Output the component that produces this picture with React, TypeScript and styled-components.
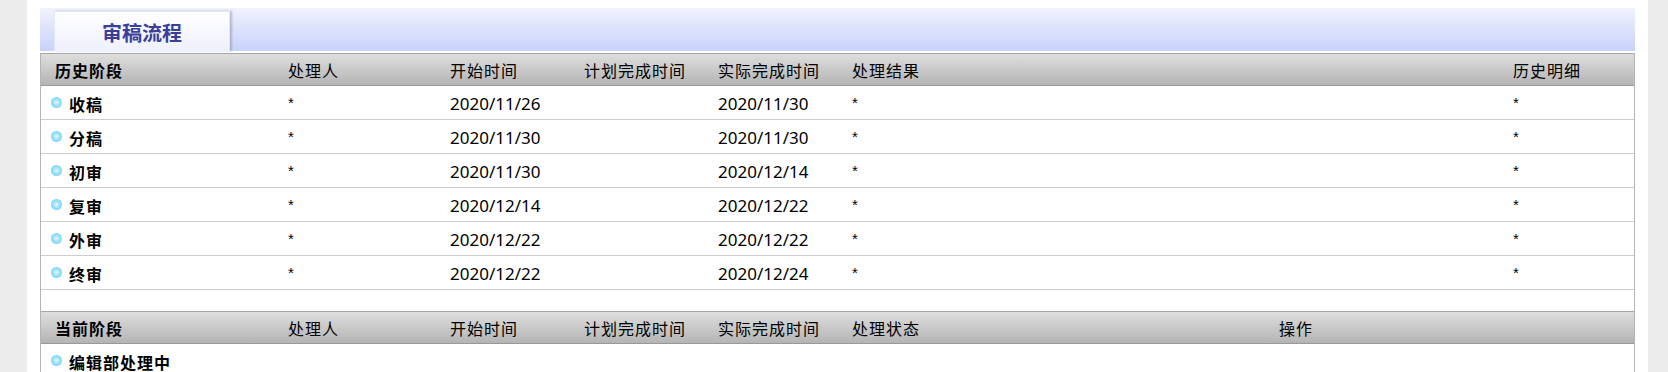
import React from 'react';
import { styled, createGlobalStyle } from 'styled-components';

const GlobalStyle = createGlobalStyle`
    html, body {
        margin: 0;
        padding: 0;
        background: #ececec;
        font-family: "Noto Sans", "Noto Sans CJK SC", sans-serif;
        color: #000;
        overflow: hidden;
    }
`;

interface HistoryRow {
    stage: string;
    handler: string;
    start: string;
    planned: string;
    actual: string;
    result: string;
    detail: string;
}

const historyRows: HistoryRow[] = [
    { stage: '收稿', handler: '*', start: '2020/11/26', planned: '', actual: '2020/11/30', result: '*', detail: '*' },
    { stage: '分稿', handler: '*', start: '2020/11/30', planned: '', actual: '2020/11/30', result: '*', detail: '*' },
    { stage: '初审', handler: '*', start: '2020/11/30', planned: '', actual: '2020/12/14', result: '*', detail: '*' },
    { stage: '复审', handler: '*', start: '2020/12/14', planned: '', actual: '2020/12/22', result: '*', detail: '*' },
    { stage: '外审', handler: '*', start: '2020/12/22', planned: '', actual: '2020/12/22', result: '*', detail: '*' },
    { stage: '终审', handler: '*', start: '2020/12/22', planned: '', actual: '2020/12/24', result: '*', detail: '*' },
];

const historyCols = '247px 162px 134px 134px 134px 661px 1fr';
const currentCols = '247px 162px 134px 134px 134px 427px 1fr';

// masked values are shown as a lone asterisk in a lighter face
const Value: React.FC<{ text: string }> = ({ text }) =>
    text === '*' ? <Star>*</Star> : <>{text}</>;

const App: React.FC = () => {
    return (
        <>
            <GlobalStyle />
            <Page>
                <TitleBar>
                    <Tab>审稿流程</Tab>
                </TitleBar>
                <Table>
                    <HeaderRow $cols={historyCols}>
                        <StageHead>历史阶段</StageHead>
                        <HeadCell>处理人</HeadCell>
                        <HeadCell>开始时间</HeadCell>
                        <HeadCell>计划完成时间</HeadCell>
                        <HeadCell>实际完成时间</HeadCell>
                        <HeadCell>处理结果</HeadCell>
                        <HeadCell>历史明细</HeadCell>
                    </HeaderRow>
                    {historyRows.map(row => (
                        <DataRow key={row.stage} $cols={historyCols}>
                            <StageCell>
                                <Bullet />
                                {row.stage}
                            </StageCell>
                            <Cell><Value text={row.handler} /></Cell>
                            <Cell>{row.start}</Cell>
                            <Cell>{row.planned}</Cell>
                            <Cell>{row.actual}</Cell>
                            <Cell><Value text={row.result} /></Cell>
                            <Cell><Value text={row.detail} /></Cell>
                        </DataRow>
                    ))}
                    <Spacer />
                    <HeaderRow $cols={currentCols}>
                        <StageHead>当前阶段</StageHead>
                        <HeadCell>处理人</HeadCell>
                        <HeadCell>开始时间</HeadCell>
                        <HeadCell>计划完成时间</HeadCell>
                        <HeadCell>实际完成时间</HeadCell>
                        <HeadCell>处理状态</HeadCell>
                        <HeadCell>操作</HeadCell>
                    </HeaderRow>
                    <DataRow $cols={currentCols}>
                        <StageCell>
                            <Bullet />
                            编辑部处理中
                        </StageCell>
                        <Cell />
                        <Cell />
                        <Cell />
                        <Cell />
                        <Cell />
                        <Cell />
                    </DataRow>
                </Table>
            </Page>
        </>
    );
};

const Page = styled.div`
    margin: 0 20px 0 27px;
    background: #fff;
    padding: 8px 13px 0 13px;
    height: 100vh;
    box-sizing: border-box;
    display: flex;
    flex-direction: column;
    overflow: hidden;
`;

const TitleBar = styled.div`
    height: 43px;
    flex-shrink: 0;
    background: linear-gradient(#f0f2fd, #c8d2fb);
    display: flex;
    align-items: flex-end;
    padding-left: 14px;
    margin-bottom: 2px;
`;

const Tab = styled.div`
    width: 176px;
    height: 40px;
    box-sizing: border-box;
    display: flex;
    align-items: center;
    justify-content: center;
    background: linear-gradient(#ffffff, #eef0fc);
    border: 1px solid #e4e7f6;
    border-bottom: none;
    box-shadow: 2px 0 2px rgba(90, 95, 130, 0.35);
    color: #3b3f9c;
    font-family: "Noto Sans CJK SC", sans-serif;
    font-size: 20px;
    font-weight: 700;
    padding-top: 2px;
`;

const Table = styled.div`
    border-left: 1px solid #b4b4b4;
    border-right: 1px solid #b4b4b4;
    display: flex;
    flex-direction: column;
    flex: 1;
    min-height: 0;
    overflow: hidden;
`;

const HeaderRow = styled.div<{ $cols: string }>`
    display: grid;
    grid-template-columns: ${({ $cols }) => $cols};
    height: 31px;
    flex-shrink: 0;
    align-items: center;
    background: linear-gradient(#dedede, #b4b4b4);
    border-top: 1px solid #a6a6a6;
    border-bottom: 1px solid #999;
`;

const HeadCell = styled.div`
    white-space: nowrap;
    font-family: "Noto Sans CJK SC", sans-serif;
    font-size: 16px;
    letter-spacing: 1px;
`;

const StageHead = styled(HeadCell)`
    font-weight: 700;
    padding-left: 14px;
`;

const DataRow = styled.div<{ $cols: string }>`
    display: grid;
    grid-template-columns: ${({ $cols }) => $cols};
    height: 33px;
    align-items: center;
    border-bottom: 1px solid #cccccc;
    font-size: 17px;
    flex-shrink: 0;
`;

const Cell = styled.div`
    white-space: nowrap;
    padding-top: 2px;
`;

const Star = styled.span`
    font-family: "Liberation Sans", sans-serif;
    font-size: 15px;
    position: relative;
    top: -2px;
`;

const StageCell = styled(Cell)`
    display: flex;
    align-items: center;
    gap: 7px;
    padding-left: 10px;
    font-family: "Noto Sans CJK SC", sans-serif;
    font-size: 16px;
    letter-spacing: 1px;
    font-weight: 700;
`;

const Bullet = styled.span`
    width: 11px;
    height: 11px;
    border-radius: 50%;
    background: radial-gradient(circle at 50% 50%, #e6f9ff 0%, #9fe3fb 40%, #52c8f4 100%);
    flex-shrink: 0;
    margin-top: -2px;
`;

const Spacer = styled.div`
    height: 21px;
    flex-shrink: 0;
`;

export default App;
